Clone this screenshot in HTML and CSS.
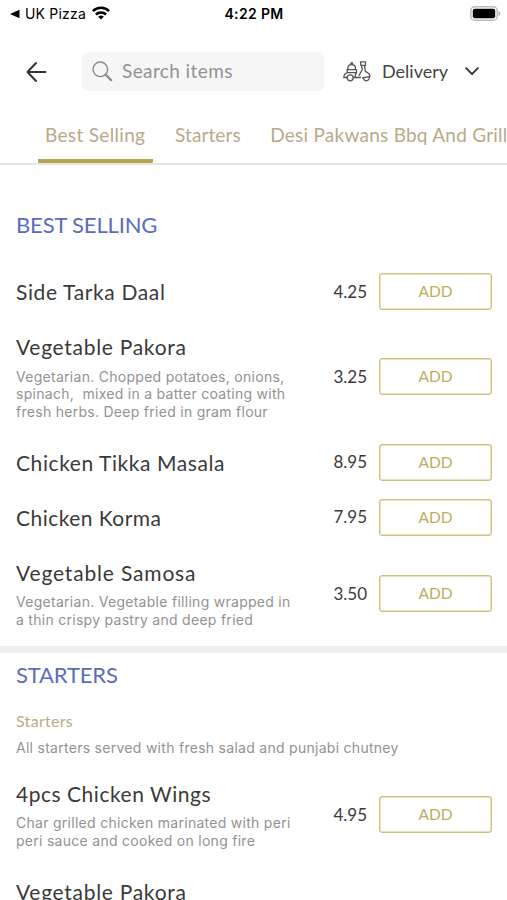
FILE: index.html
```html
<!DOCTYPE html>
<html lang="en">
<head>
<meta charset="utf-8">
<title>Menu</title>
<link rel="stylesheet" href="styles.css">
</head>
<body>
<div class="status">
  <div class="status-left">
    <svg width="10" height="10" viewBox="0 0 10 10"><path d="M0 5 9.500 .8v8.400z"/></svg>
    <span class="carrier">UK Pizza</span>
    <svg class="wifi" width="18" height="14" viewBox="0 0 18 14"><g fill="none" stroke="#000" stroke-width="2.500"><path d="M.9 5.200a11.500 11.500 0 0 1 16.200 0"/><path d="M3.900 8.500a7.200 7.200 0 0 1 10.200 0"/></g><path d="M9 13.500 6.200 10.800a4 4 0 0 1 5.600 0z"/></svg>
  </div>
  <div class="clock">4:22 PM</div>
  <svg class="battery" width="31" height="15" viewBox="0 0 31 15"><rect x=".8" y=".8" width="26.400" height="13.400" rx="4" fill="#fff" stroke="#bbb" stroke-width="1.500"/><rect x="2.800" y="2.800" width="22.400" height="9.400" rx="2"/><path d="M28.500 5v5q1.800-.8 1.800-2.500T28.500 5z" fill="#aaa"/></svg>
</div>
<header class="toolbar">
  <svg class="back" width="22" height="22" viewBox="0 0 22 22" fill="none" stroke="#333" stroke-width="2" stroke-linecap="round" stroke-linejoin="round"><path d="M19.500 11H1.500M10 2 1.500 11l8.500 9"/></svg>
  <div class="search">
    <svg width="21" height="21" viewBox="0 0 21 21" fill="none" stroke="#888"><circle cx="8.300" cy="8.300" r="7.300" stroke-width="1.400"/><path d="m13.700 13.700 5.500 5.500" stroke-width="2.200" stroke-linecap="round"/></svg>
    <span class="search-text">Search items</span>
  </div>
  <svg class="scooter" width="28" height="21" viewBox="0 0 28 21" fill="none" stroke="#555" stroke-width="1.300" stroke-linecap="round" stroke-linejoin="round"><path d="M4.800 8.500Q4.500 3.500 8.700 3.500T12.500 8.500M8 3.300V2h1.500v1.300M4 8.700h9.500v3H4.500zM4.500 11.700Q1 12.500 .8 16.500h3.200M10.500 16.500h7M13.500 11.700q-2 2-1 4.800M17.500 .8h5v3.500h-4.700zM18.300 4.300l1 4.200-3.300 6M21.500 4.300l.8 6q4.700 2 4.700 5l-7.500 1.500"/><circle cx="7.200" cy="16.800" r="3"/><path d="M20.300 16.700a3 3 0 1 0 5.800-1"/></svg>
  <span class="mode">Delivery</span>
  <svg class="chevron" width="14" height="9" viewBox="0 0 14 9" fill="none" stroke="#333" stroke-width="1.900" stroke-linecap="round" stroke-linejoin="round"><path d="m1.200 1.200 5.800 6 5.800-6"/></svg>
</header>
<nav class="tabs">
  <div class="tab active t1">Best Selling</div>
  <div class="tab t2">Starters</div>
  <div class="tab t3">Desi Pakwans Bbq And Grill</div>
</nav>
<main>
  <section class="best">
    <h2 class="best-title">BEST SELLING</h2>
    <div class="items">
      <div class="item"><div class="info"><h3 class="n1">Side Tarka Daal</h3></div><span class="price">4.25</span><button>ADD</button></div>
      <div class="item"><div class="info"><h3 class="n2">Vegetable Pakora</h3><p>Vegetarian. Chopped potatoes, onions,<br>spinach,&nbsp; mixed in a batter coating with<br>fresh herbs. Deep fried in gram flour</p></div><span class="price">3.25</span><button>ADD</button></div>
      <div class="item"><div class="info"><h3 class="n3">Chicken Tikka Masala</h3></div><span class="price">8.95</span><button>ADD</button></div>
      <div class="item"><div class="info"><h3 class="n4">Chicken Korma</h3></div><span class="price">7.95</span><button>ADD</button></div>
      <div class="item"><div class="info"><h3 class="n5">Vegetable Samosa</h3><p>Vegetarian. Vegetable filling wrapped in<br>a thin crispy pastry and deep fried</p></div><span class="price">3.50</span><button>ADD</button></div>
    </div>
  </section>
  <section class="starters">
    <h2 class="starters-title">STARTERS</h2>
    <h4>Starters</h4>
    <p class="note">All starters served with fresh salad and punjabi chutney</p>
    <div class="items">
      <div class="item"><div class="info"><h3 class="n6">4pcs Chicken Wings</h3><p>Char grilled chicken marinated with peri<br>peri sauce and cooked on long fire</p></div><span class="price">4.95</span><button>ADD</button></div>
      <div class="item"><div class="info"><h3 class="n2">Vegetable Pakora</h3></div></div>
    </div>
  </section>
</main>
</body>
</html>
```

FILE: styles.css
```css
* { box-sizing: border-box; }
html, body { margin: 0; height: 900px; overflow: hidden; background: #fff; }
body { font-family: Lato, sans-serif; color: #3a3a3a; }
h2, h3, h4, p { margin: 0; font-weight: 400; }
svg { display: block; flex: none; }

.status { display: grid; grid-template-columns: 1fr auto 1fr; align-items: center; height: 28px; padding: 0 6px 0 10px; font-family: Inter, sans-serif; color: #000; }
.status-left { display: flex; align-items: center; }
.carrier { margin-left: 5px; margin-top: -1px; font-size: 14px; letter-spacing: .2px; white-space: nowrap; }
.wifi { margin-left: 6px; margin-top: -3px; }
.clock { margin: -1px 3px 0 0; font-size: 14px; font-weight: 600; letter-spacing: .35px; }
.battery { justify-self: end; margin-top: -2px; }

.toolbar { display: flex; align-items: center; height: 71px; padding: 16px 0 0 26px; }
.search { display: flex; align-items: center; flex: none; width: 242px; height: 39px; margin-left: 34px; padding-left: 10px; border-radius: 6px; background: #f6f6f6; }
.search-text { margin-left: 9px; margin-top: -2px; font-size: 19px; letter-spacing: .4px; color: #929292; }
.scooter { margin-left: 19px; }
.mode { margin: -2px 0 0 11px; width: 67px; font-size: 18px; color: #444; }
.chevron { margin-left: 16px; }

.tabs { display: flex; height: 66px; border-bottom: 2px solid #e6e6e6; padding-left: 38px; overflow: hidden; }
.tab { flex: none; height: 64px; padding: 0 7px; line-height: 72px; font-size: 19px; white-space: nowrap; color: #b9aa87; }
.active { border-bottom: 4px solid #b5a54f; border-radius: 1px; }
.t1 { width: 115px; letter-spacing: .33px; }
.t2 { margin-left: 15px; letter-spacing: .1px; }
.t3 { margin-left: 15.5px; letter-spacing: .25px; }

h2 { padding-left: 16px; font-size: 22px; line-height: 30px; letter-spacing: -.15px; color: #5b6cc0; }
.best { height: 488px; padding-top: 45px; border-bottom: 7px solid #eee; }
.items { display: flex; flex-direction: column; gap: 18px; padding: 0 15px 0 16px; }
.best .items { margin-top: 33px; }
.item { display: flex; align-items: center; }
.info { flex: 1; }
h3 { font-size: 21px; line-height: 37px; white-space: nowrap; }
.n1 { letter-spacing: .63px; }
.n2 { letter-spacing: .71px; }
.n3 { letter-spacing: .58px; }
.n4 { letter-spacing: .46px; }
.n5 { letter-spacing: .83px; }
.n6 { letter-spacing: .52px; }
p { font-family: Inter, sans-serif; font-size: 14px; line-height: 17.5px; letter-spacing: .28px; color: #929292; white-space: nowrap; }
.info p { padding: 2.5px 0 5.5px; }
.price { width: 40px; margin: -1px 12px 0 0; text-align: right; font-size: 17px; }
button { width: 113px; height: 37px; padding: 0 0 1px; border: 1.5px solid #cfc27e; border-radius: 3px; background: #fff; color: #bcae5c; font-family: Lato, sans-serif; font-size: 15.5px; box-shadow: inset 0 0 0 .5px #cfc27e; }
.starters-title { margin-top: 7px; }
h4 { margin: 21px 0 0 16px; font-size: 16px; line-height: 20px; letter-spacing: .3px; color: #b9aa87; }
.note { margin: 8px 0 18px 16px; }
```
